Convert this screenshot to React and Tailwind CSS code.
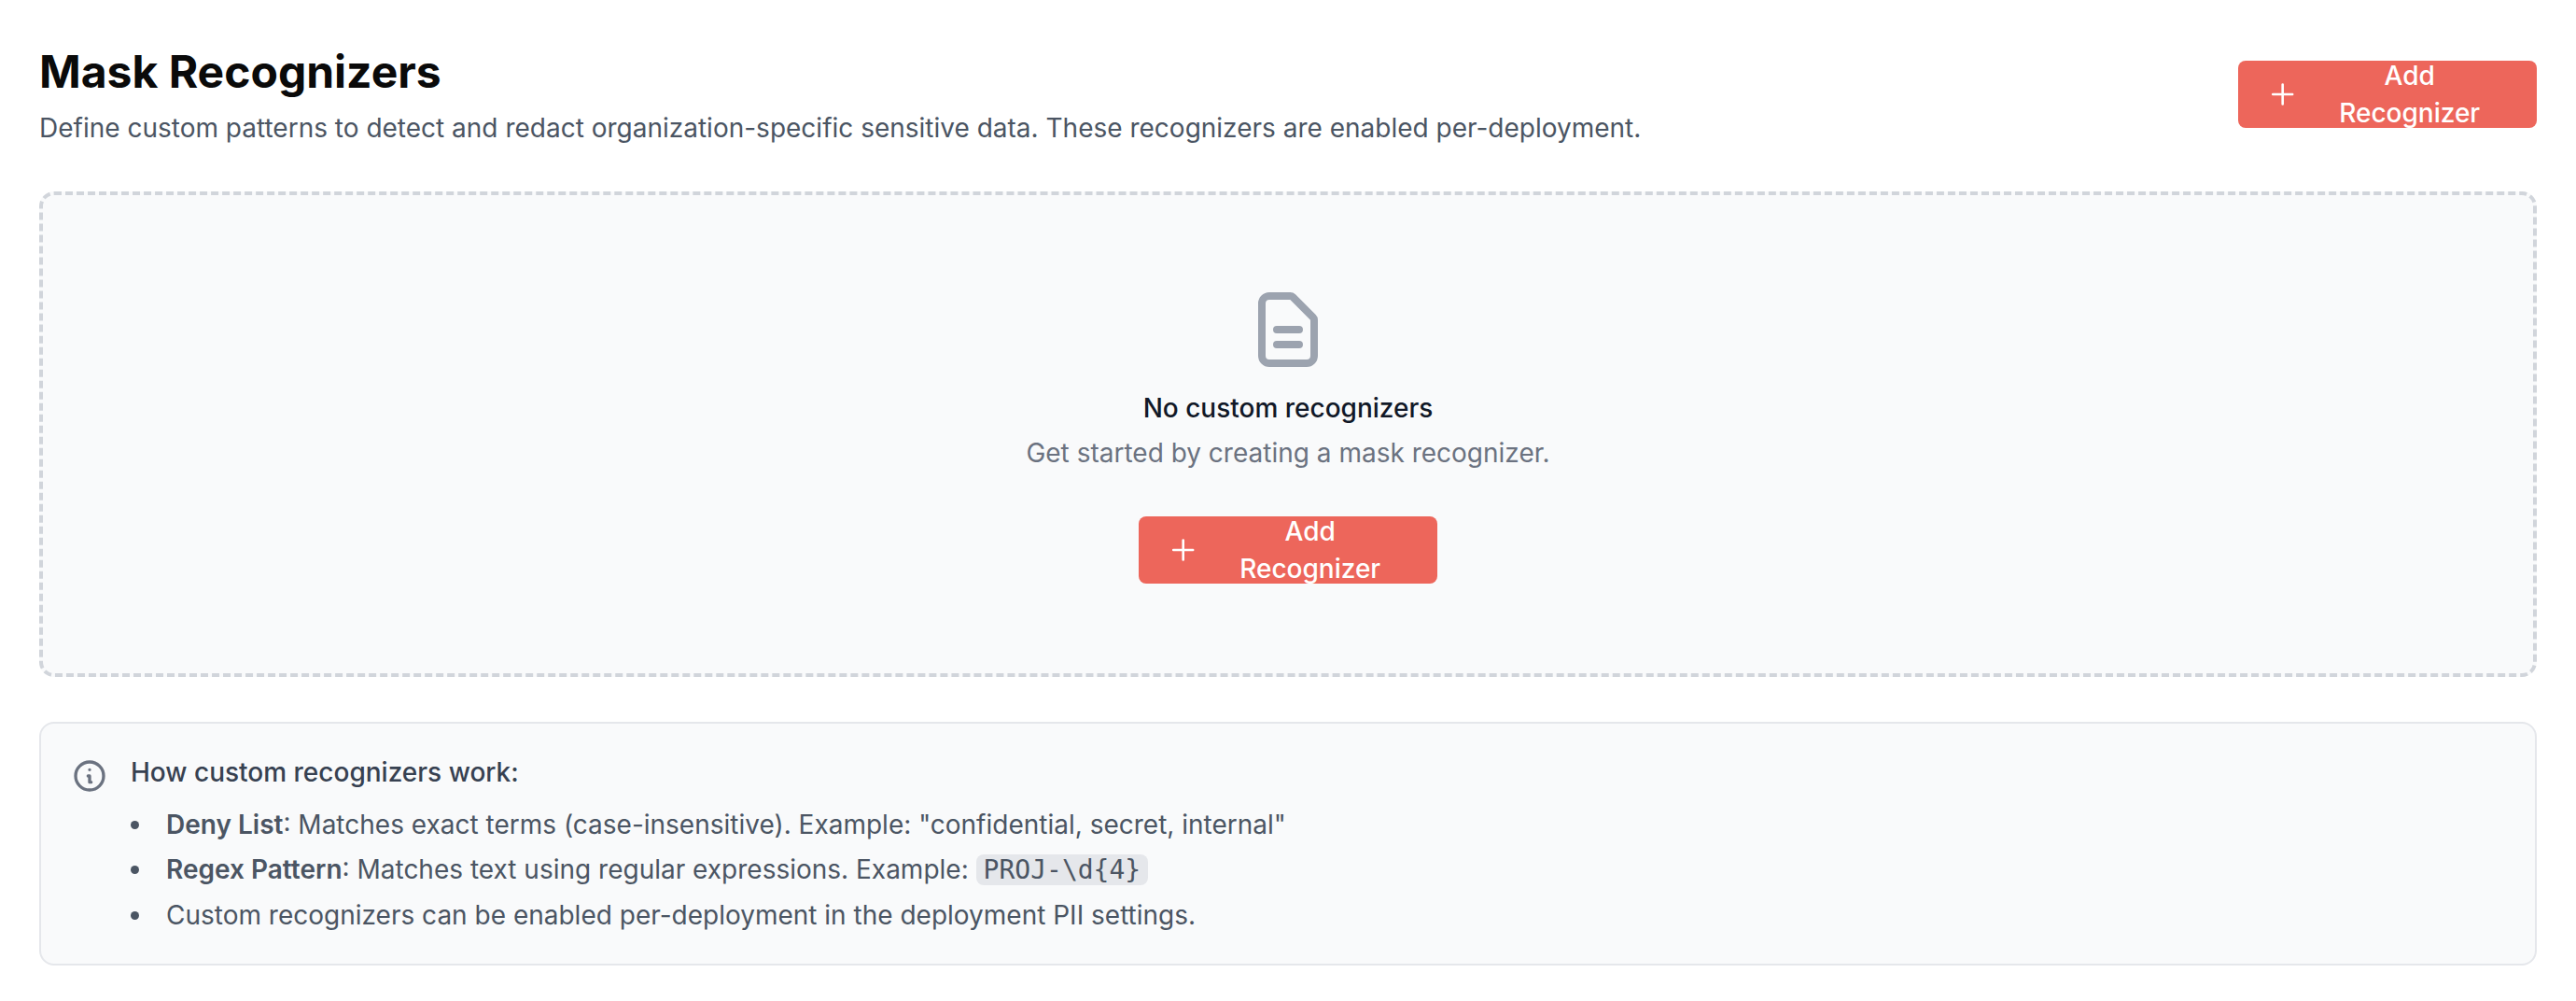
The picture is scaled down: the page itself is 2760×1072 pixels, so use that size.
const sans = "font-['Inter',sans-serif]";

function PlusIcon() {
  return (
    <svg className="w-8 h-8 mr-4" fill="none" viewBox="0 0 24 24" stroke="currentColor" strokeWidth="2" strokeLinecap="round" strokeLinejoin="round">
      <path d="M12 4v16m8-8H4" />
    </svg>
  );
}

function AddButton() {
  return (
    <button className="inline-flex items-center h-[72px] w-[320px] px-8 rounded-lg bg-[#ed665b] text-white text-[28px] leading-10 font-medium">
      <PlusIcon />
      Add Recognizer
    </button>
  );
}

export default function App() {
  return (
    <div className={`${sans} w-[2760px] h-[1072px] bg-white px-[42px] pt-[45px] overflow-hidden`}>
      <div className="flex items-center justify-between mb-12">
        <div>
          <h1 className="text-[48px] leading-[64px] font-bold text-[#0a0a0a]">Mask Recognizers</h1>
          <p className="mt-2 text-[28px] leading-10 text-[#4b5563]">
            Define custom patterns to detect and redact organization-specific sensitive data. These recognizers are enabled per-deployment.
          </p>
        </div>
        <AddButton />
      </div>

      <div className="flex flex-col items-center h-[520px] py-24 rounded-2xl border-4 border-dashed border-[#d1d5db] bg-[#f9fafb]">
        <svg className="w-24 h-24 text-[#9ca3af]" fill="none" viewBox="0 0 24 24" stroke="currentColor" strokeWidth="2" strokeLinecap="round" strokeLinejoin="round">
          <path d="M9 12h6m-6 4h6m2 5H7a2 2 0 01-2-2V5a2 2 0 012-2h5.586a1 1 0 01.707.293l5.414 5.414a1 1 0 01.293.707V19a2 2 0 01-2 2z" />
        </svg>
        <h3 className="mt-4 text-[28px] leading-10 font-medium text-[#111827]">No custom recognizers</h3>
        <p className="mt-2 text-[28px] leading-10 text-[#6b7280]">Get started by creating a mask recognizer.</p>
        <div className="mt-12">
          <AddButton />
        </div>
      </div>

      <div className="mt-12 flex gap-6 p-8 rounded-2xl border-2 border-[#e5e7eb] bg-[#f9fafb]">
        <svg className="w-10 h-10 mt-1 shrink-0 text-[#6b7280]" fill="none" viewBox="0 0 24 24" stroke="currentColor" strokeWidth="2" strokeLinecap="round" strokeLinejoin="round">
          <path d="M13 16h-1v-4h-1m1-4h.01M21 12a9 9 0 11-18 0 9 9 0 0118 0z" />
        </svg>
        <div className="text-[28px] leading-10 text-[#4b5563]">
          <p className="font-medium text-[#374151]">How custom recognizers work:</p>
          <ul className="mt-4 flex flex-col gap-2 list-disc list-inside">
            <li><strong className="font-semibold">Deny List</strong>: Matches exact terms (case-insensitive). Example: "confidential, secret, internal"</li>
            <li><strong className="font-semibold">Regex Pattern</strong>: Matches text using regular expressions. Example: <code className="font-['DejaVu_Sans_Mono',monospace] px-2 rounded-lg bg-[#e5e7eb]">PROJ-\d{"{4}"}</code></li>
            <li>Custom recognizers can be enabled per-deployment in the deployment PII settings.</li>
          </ul>
        </div>
      </div>
    </div>
  );
}
